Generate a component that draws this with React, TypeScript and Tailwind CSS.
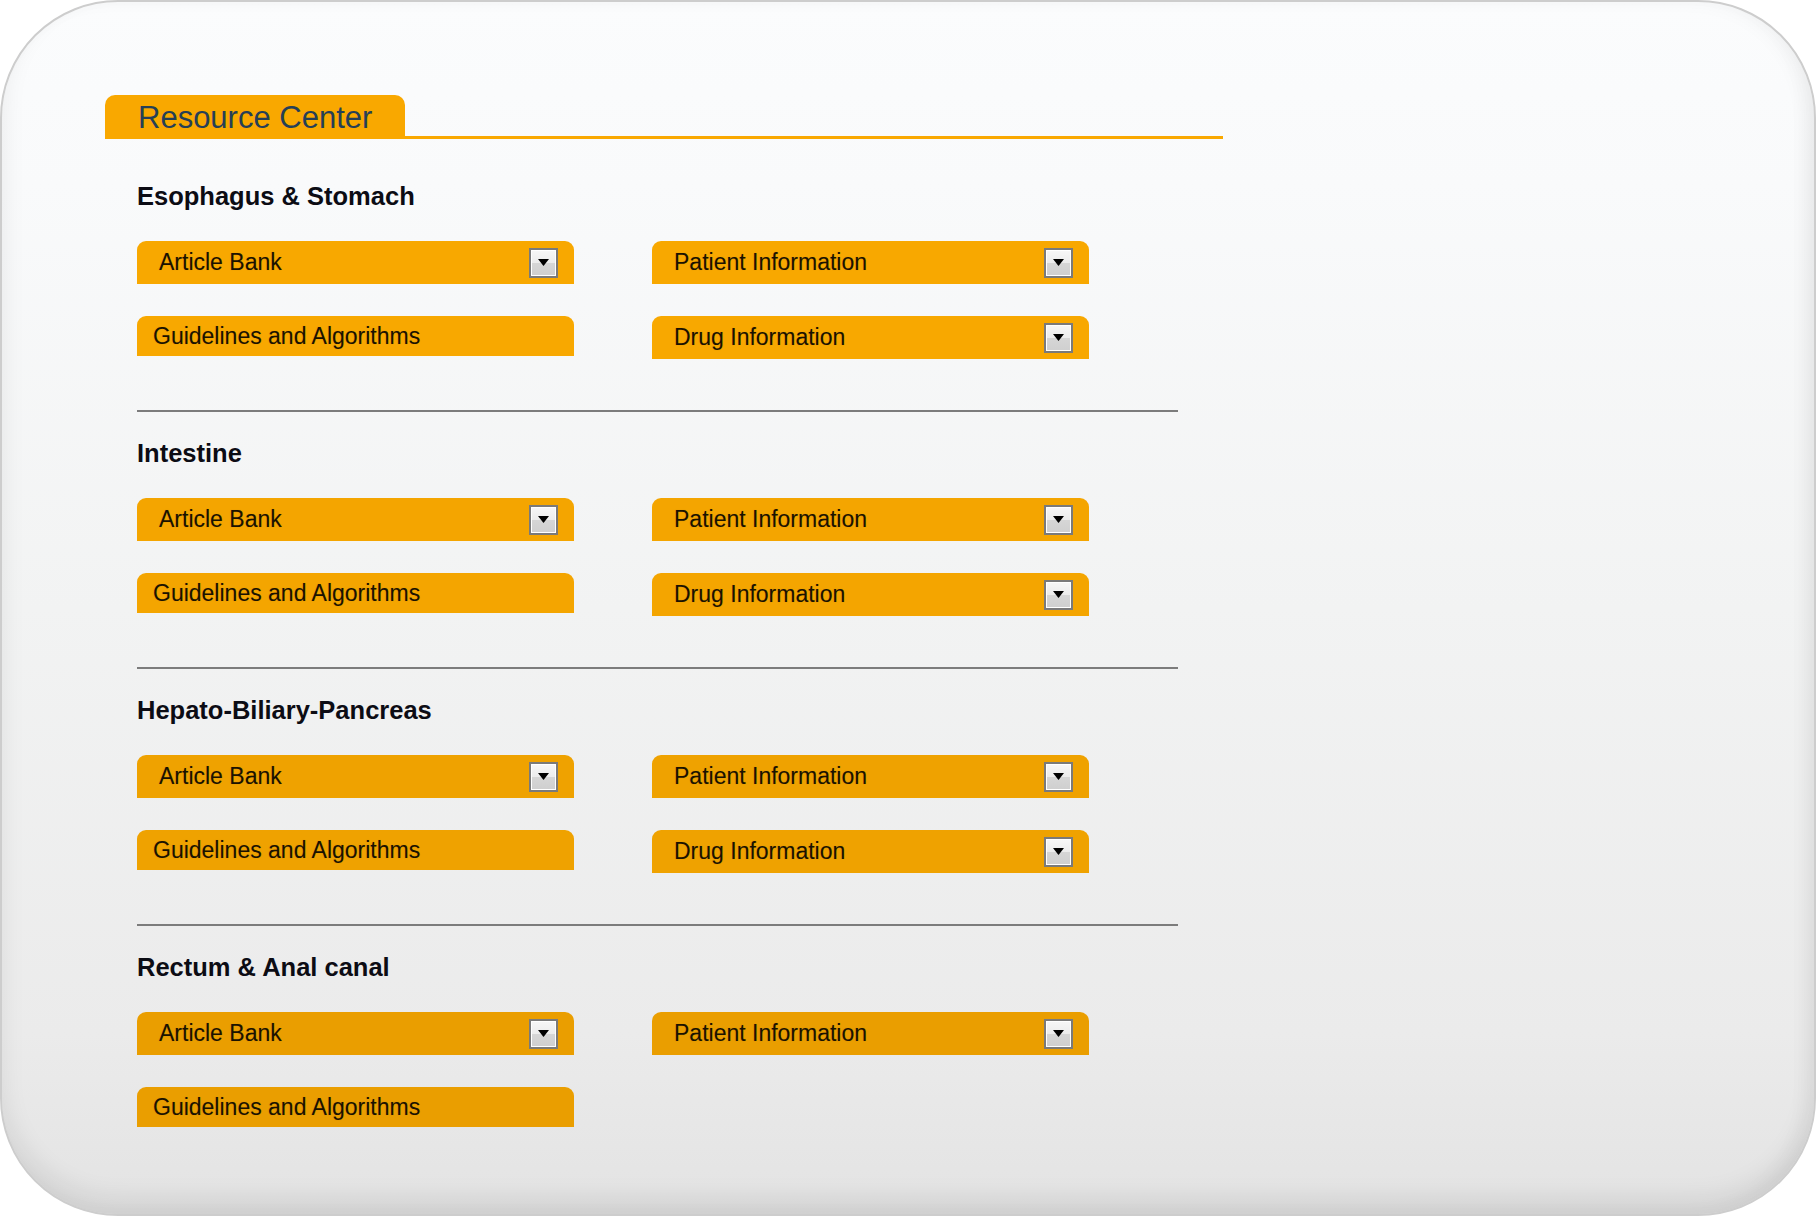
const sections = [
	{ title: 'Esophagus & Stomach', orange: 'bg-[#f8a800]', drug: true },
	{ title: 'Intestine', orange: 'bg-[#f4a500]', drug: true },
	{ title: 'Hepato-Biliary-Pancreas', orange: 'bg-[#efa200]', drug: true },
	{ title: 'Rectum & Anal canal', orange: 'bg-[#ea9e00]', drug: false },
]

function Arrow() {
	return (
		<span className="flex h-[30px] w-[29px] items-center justify-center border-2 border-[#7a7a7a] bg-[linear-gradient(#f7f7f7_0%,#ececec_50%,#d6d6d6_51%,#cfcfcf_100%)] shadow-[inset_0_0_0_1px_#fff]">
			<svg width="11" height="7" viewBox="0 0 11 7">
				<path d="M0 0h11L5.5 7z" fill="#000" />
			</svg>
		</span>
	)
}

function Select({ label, color }: { label: string; color: string }) {
	return (
		<div className={`flex h-[43px] w-[437px] items-center justify-between rounded-t-[9px] pl-[22px] pr-[16px] ${color}`}>
			<span className="text-[23px] text-[#1a1200] [text-shadow:0_0_1px_rgba(90,50,0,0.25)]">{label}</span>
			<Arrow />
		</div>
	)
}

export default function App() {
	return (
		<main className="h-[1216px] w-[1816px] bg-white font-['Liberation_Sans',Arial,sans-serif]">
			<div className="h-full w-full rounded-[118px] border-2 border-[#cdcdcd] bg-[linear-gradient(#fbfcfd_0%,#f9fafb_15%,#f2f3f3_50%,#ebebeb_85%,#e3e3e3_100%)] pl-[103px] pt-[93px] shadow-[inset_0_-16px_24px_rgba(0,0,0,0.08),inset_-10px_0_18px_rgba(0,0,0,0.03)]">
				{/* tab header */}
				<div className="flex w-[1118px] items-end">
					<div className="flex h-[44px] w-[300px] items-center rounded-t-[10px] bg-[#f9a800] pl-[33px]">
						<span className="text-[31px] leading-none text-[#263f56]">Resource Center</span>
					</div>
					<div className="h-[3px] flex-1 bg-[#f9a800]" />
				</div>

				<div className="pl-[32px] pt-[43px]">
					{sections.map((s, i) => (
						<section key={s.title}>
							{i > 0 && <div className="mb-[27px] mt-[51px] h-[2px] w-[1041px] bg-[#7c7c7c]" />}
							<h2 className="h-[28px] text-[25.5px] font-bold leading-[28px] text-[#0c0c14]">{s.title}</h2>
							<div className="mt-[31px] flex gap-[78px]">
								<Select label="Article Bank" color={s.orange} />
								<Select label="Patient Information" color={s.orange} />
							</div>
							<div className="mt-[32px] flex items-start gap-[78px]">
								<div className={`flex h-[40px] w-[437px] items-center rounded-t-[9px] pl-[16px] ${s.orange}`}>
									<span className="text-[23px] text-[#1a1200] [text-shadow:0_0_1px_rgba(90,50,0,0.25)]">Guidelines and Algorithms</span>
								</div>
								{s.drug && <Select label="Drug Information" color={s.orange} />}
							</div>
						</section>
					))}
				</div>
			</div>
		</main>
	)
}
